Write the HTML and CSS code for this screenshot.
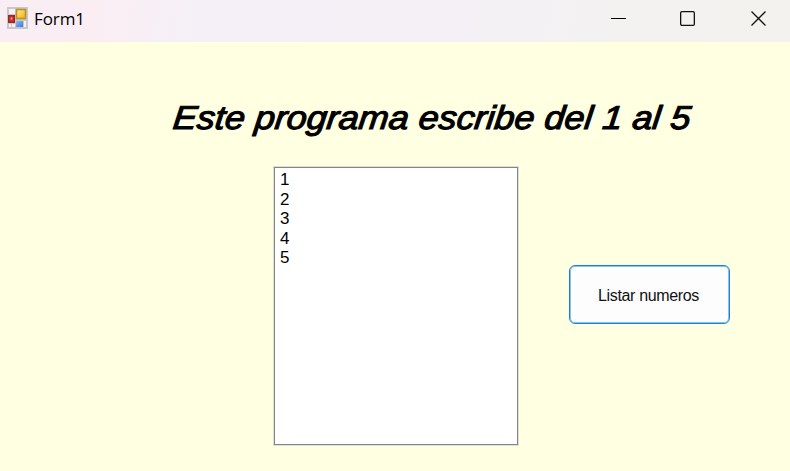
FILE: index.html
```html
<!DOCTYPE html>
<html lang="es">
<head>
<meta charset="utf-8">
<title>Form1</title>
<link rel="stylesheet" href="styles.css">
</head>
<body>
<div class="window">
  <header class="titlebar">
    <svg class="app-icon" width="21" height="22" viewBox="0 0 21 22">
      <defs>
        <linearGradient id="gold" x1="0" y1="0" x2="1" y2="1"><stop offset="0" stop-color="#ffe98f"/><stop offset="1" stop-color="#f0b010"/></linearGradient>
        <linearGradient id="blue" x1="0" y1="0" x2="1" y2="1"><stop offset="0" stop-color="#8fb9fa"/><stop offset="1" stop-color="#3c78dc"/></linearGradient>
      </defs>
      <rect width="21" height="22" fill="#c8c8ca"/>
      <path d="M2 2h6v5H2zM2 17h2v3H2zM5 17h3v3H5zM17 14h2v6h-2z" fill="#f5f1f6"/>
      <rect x="1" y="8" width="7" height="8" fill="#a52420"/>
      <rect x="2.5" y="9.5" width="4" height="5" fill="#c73a32"/>
      <rect x="3.7" y="10.5" width="1.5" height="2" fill="#f0b0a8"/>
      <rect x="9.5" y="2.5" width="9" height="9" fill="url(#gold)" stroke="#c0921c" stroke-width="1.6"/>
      <rect x="9" y="14" width="7" height="6" fill="url(#blue)"/>
    </svg>
    <span class="caption">Form1</span>
    <div class="controls">
      <svg width="15" height="15" viewBox="0 0 15 15"><path d="M0 7.5h15" stroke="#000"/></svg>
      <svg width="15" height="15" viewBox="0 0 15 15"><rect x=".65" y=".65" width="13.7" height="13.7" rx="1.3" fill="none" stroke="#111" stroke-width="1.3"/></svg>
      <svg width="15" height="15" viewBox="0 0 15 15"><path d="M.5.5l14 14M14.5.5l-14 14" stroke="#111" stroke-width="1.3"/></svg>
    </div>
  </header>
  <main class="form">
    <h1 class="heading"><span class="heading-text">Este programa escribe del 1 al 5</span></h1>
    <div class="row">
      <ul class="listbox"><li>1</li><li>2</li><li>3</li><li>4</li><li>5</li></ul>
      <button class="button" type="button"><span class="button-text">Listar numeros</span></button>
    </div>
  </main>
</div>
</body>
</html>
```
FILE: styles.css
```css
* { box-sizing: border-box; }
body { margin: 0; }
.window {
  width: 790px;
  height: 471px;
  overflow: hidden;
  background: #ffffe1;
  color: #000;
  font-family: "Liberation Sans", Arial, sans-serif;
}
.titlebar {
  display: flex;
  height: 42px;
  padding: 7px 24px 0 7px;
  background: linear-gradient(100deg, #f8eef4 0%, #faeef3 12%, #f5f0f7 25%, #f4f0f6 55%, #f3f2f1 78%, #f3f2ee 100%);
}
.app-icon { flex: none; }
.caption {
  margin-left: 6px;
  font: 17px/24px "Open Sans", sans-serif;
  letter-spacing: -0.1px;
}
.controls {
  display: flex;
  gap: 56px;
  margin: 4px 0 0 auto;
}
.controls svg:first-child { margin-right: -2px; }
.heading {
  margin: 0;
  padding: 54px 0 0 172px;
  height: 125px;
  font-size: 33px;
  line-height: 44px;
  font-weight: 400;
  font-style: italic;
  white-space: nowrap;
}
.heading-text {
  display: inline-block;
  transform-origin: 0 75%;
  transform: scaleX(1.089) skewX(-6deg);
  -webkit-text-stroke: 1.1px #000;
}
.row {
  display: flex;
  gap: 51px;
  padding-left: 274px;
}
.listbox {
  width: 244px;
  height: 278px;
  margin: 0;
  padding: 2px 5px;
  border: 1px solid #82858f;
  outline: 1px solid #82858f40;
  background: #fff;
  list-style: none;
  font-size: 17px;
  line-height: 19.5px;
}
.button {
  width: 161px;
  height: 59px;
  margin-top: 98px;
  padding: 2px 2px 0 0;
  border: 1px solid #1883d7;
  border-radius: 6px;
  box-shadow: inset 0 0 0 1px #1883d780;
  background: #fdfdfd;
  color: #111;
  font: 16px/20px "Liberation Sans", Arial, sans-serif;
}
.button-text { letter-spacing: -0.35px; }
```
